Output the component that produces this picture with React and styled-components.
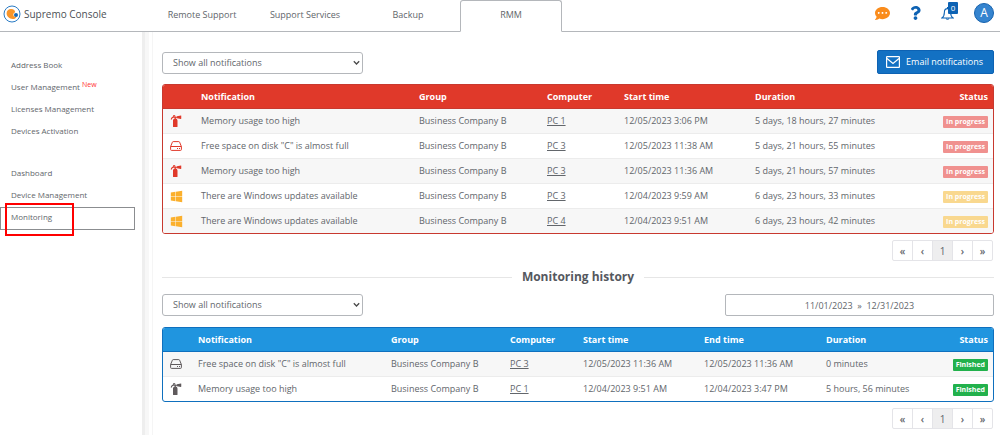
import * as React from "react"
import styled, { createGlobalStyle, ThemeProvider } from "styled-components"
import {
  FaCommentDots,
  FaFireExtinguisher,
  FaQuestion,
  FaWindows,
} from "react-icons/fa"

const theme = {
  text: "#62666b",
  line: "#b4b7bb",
  red: "#e0392a",
  blue: "#2095df",
  navy: "#0d62b3",
  amber: "#fbb02d",
  green: "#22b14c",
}

const GlobalStyle = createGlobalStyle`
  * {
    box-sizing: border-box;
  }

  body {
    margin: 0;
    background: #fff;
    color: ${theme.text};
    font-family: "Open Sans", "Noto Sans", sans-serif;
    font-size: 9px;
    line-height: 12px;
  }

  button, input, select {
    font: inherit;
    color: inherit;
  }
`

const Page = styled.div`
  min-height: 100vh;
  display: flex;
  flex-direction: column;
`

const Header = styled.header`
  display: flex;
  height: 32px;
  border-bottom: 1px solid ${({ theme }) => theme.line};
`

const Brand = styled.a`
  display: flex;
  align-items: center;
  gap: 3px;
  width: 151px;
  padding: 0 0 3px 3px;
  color: #4c4f55;
  font-size: 10px;
  font-weight: 500;
  text-decoration: none;
`

const Tabs = styled.nav`
  display: flex;
  gap: 1px;
`

const Tab = styled.a`
  width: 102px;
  height: 32px;
  padding-bottom: 2px;
  display: flex;
  align-items: center;
  justify-content: center;
  color: inherit;
  text-decoration: none;
  border: 1px solid ${({ theme, $active }) => ($active ? theme.line : "transparent")};
  border-bottom-color: ${({ $active }) => ($active ? "#fff" : "transparent")};
  border-radius: 3px 3px 0 0;
`

const Tools = styled.div`
  display: flex;
  align-items: center;
  margin-left: auto;
  padding: 0 6px 5px 0;
  gap: 20px;
`

const Tool = styled.button`
  position: relative;
  display: flex;
  padding: 0;
  border: 0;
  background: none;
  color: ${({ $color }) => $color};

  svg {
    width: ${({ $width }) => $width}px;
  }
`

const Count = styled.span`
  position: absolute;
  top: -4px;
  right: -4px;
  width: 10px;
  height: 12px;
  border-radius: 1px;
  background: ${({ theme }) => theme.navy};
  color: #fff;
  font-size: 8px;
  line-height: 12px;
`

const Avatar = styled.button`
  width: 20px;
  height: 20px;
  padding: 0;
  border: 1px solid #1763ae;
  border-radius: 50%;
  background: #3584cf;
  color: #fff;
  font-size: 12px;
  line-height: 18px;
`

const Body = styled.div`
  flex: 1;
  display: flex;
`

const Sidebar = styled.aside`
  flex: 0 0 153px;
  padding: 23px 18px 0 0;
  background: linear-gradient(
    to right,
    #fff 142px,
    #eee 142px 145px,
    #f7f7f7 145px 149px,
    #fff 149px 152px,
    #f5f5f5 152px
  );
  font-size: 8px;
`

const Menu = styled.nav`
  display: flex;
  flex-direction: column;
  & + & {
    margin-top: 20px;
  }
`

const MenuLink = styled.a`
  position: relative;
  height: ${({ $active }) => ($active ? "23px" : "22px")};
  padding-left: 11px;
  line-height: 20px;
  color: inherit;
  text-decoration: none;
  box-shadow: ${({ $active }) => ($active ? "inset 0 0 0 1px #8b8d90" : "none")};

  sup {
    color: #f33;
    font-size: 7px;
    line-height: 0;
    vertical-align: 3px;
  }
`

const Marker = styled.span`
  position: absolute;
  left: 5px;
  top: -4px;
  width: 69px;
  height: 33px;
  border: 2px solid #f00;
  pointer-events: none;
`

const Content = styled.main`
  flex: 1;
  min-width: 0;
  padding: 18px 6px 6px 9px;
`

const Toolbar = styled.div`
  display: flex;
  justify-content: space-between;
  align-items: ${({ $align }) => $align};
  height: 24px;
  margin-bottom: 10px;
`

const SelectBox = styled.label`
  position: relative;
  width: 201px;

  select {
    appearance: none;
    display: block;
    width: 100%;
    height: 22px;
    padding: 0 10px;
    border: 1px solid ${({ theme }) => theme.line};
    border-radius: 3px;
    background: #fff;
  }

  svg {
    position: absolute;
    right: 3px;
    top: 8px;
  }
`

const EmailButton = styled.button`
  display: flex;
  align-items: center;
  gap: 6px;
  height: 24px;
  padding: 0 10px 0 8px;
  border: 1px solid ${({ theme }) => theme.navy};
  border-radius: 2px;
  background: #1371c3;
  color: #fff;
`

const DateRange = styled.input`
  width: 269px;
  height: 22px;
  padding: 0;
  border: 1px solid ${({ theme }) => theme.line};
  border-radius: 2px;
  text-align: center;
`

const TableFrame = styled.div`
  overflow: hidden;
  border: 1px solid ${({ $edge }) => $edge};
  border-radius: 3px;
`

const Table = styled.table`
  table-layout: fixed;
  width: 100%;
  border-spacing: 0;

  th,
  td {
    height: 25px;
    padding: 0 6px;
    text-align: left;
    white-space: nowrap;
  }

  th {
    height: 24px;
    padding-top: 1px;
    background: ${({ $color }) => $color};
    border-bottom: 1px solid ${({ $edge }) => $edge};
    color: #fff;
    font-weight: 700;
  }

  td {
    border-bottom: 1px solid #ececec;
  }

  tbody tr:nth-child(odd) {
    background: #f7f7f7;
  }

  tbody tr:last-child td {
    height: 24px;
    border-bottom: 0;
  }

  th:last-child,
  td:last-child {
    padding-right: 5px;
    text-align: right;
  }

  td:last-child {
    padding-top: 2px;
  }

  td:first-child svg {
    display: block;
    margin-left: 1px;
  }

  a {
    color: inherit;
  }
`

const Badge = styled.span`
  display: inline-block;
  height: 12px;
  padding: 0 3px;
  border-radius: 1px;
  background: ${({ $color }) => $color};
  color: #fff;
  font-size: 7px;
  font-weight: 700;
  line-height: 12px;
  vertical-align: middle;
`

const Pager = styled.nav`
  display: flex;
  justify-content: flex-end;
  margin: 6px 1px 0 0;
`

const PageButton = styled.button`
  width: 21px;
  height: 21px;
  padding: 0;
  border: 1px solid #e4e4e8;
  background: ${({ $current }) => ($current ? "#eeeeef" : "#fff")};
  font-size: 10px;
  font-weight: ${({ $current }) => ($current ? 400 : 600)};

  & + & {
    margin-left: -1px;
  }
  &:first-child {
    border-radius: 2px 0 0 2px;
  }
  &:last-child {
    border-radius: 0 2px 2px 0;
  }
`

const Divider = styled.h2`
  display: flex;
  align-items: center;
  gap: 10px;
  height: 20px;
  margin: 6px 0;
  color: #55585e;
  font-size: 12px;
  font-weight: 700;

  &:before,
  &:after {
    content: "";
    flex: 1;
    height: 1px;
    background: #e6e6e6;
  }
`

const Logo = () => (
  <svg width="18" height="18" viewBox="0 0 18 18" aria-hidden="true">
    <circle cx="9" cy="9" r="8" fill="#fff" stroke="#2a7bc4" strokeWidth="1" />
    <path
      d="M8 4c3 0 4 1.500 4.200 3.500-1.500.2-2.200 1.500-1.700 2.900.4 1.300 1.700 1.600 3 1.300-.6 1.700-2.200 2.400-3.900 2.300C6.500 13.800 3.600 11.300 3.600 8.200 3.600 5.700 5.500 4 8 4z"
      fill="#f9962a"
    />
    <circle cx="13" cy="10" r="2" fill="#1668b5" />
  </svg>
)

const Bell = () => (
  <svg height="15" viewBox="0 0 12 13" fill="none" stroke="currentColor" aria-hidden="true">
    <path d="M6 .6v1.400M6 2c-1.900 0-2.900 1.500-2.900 3.500 0 3-1 4.300-2.300 5.200h10.400c-1.300-.9-2.300-2.200-2.300-5.200 0-2-1-3.500-2.900-3.500z" />
    <path d="M4.700 11a1.400 1.400 0 0 0 2.600 0" />
  </svg>
)

const Envelope = () => (
  <svg width="14" height="12" viewBox="0 0 14 12" fill="none" stroke="currentColor" aria-hidden="true">
    <rect x=".6" y=".6" width="12.800" height="10.800" rx=".5" strokeWidth="1.200" />
    <path d="M1 2.500l6 5 6-5" strokeWidth="1.200" />
  </svg>
)

const Disk = ({ color }) => (
  <svg width="12" height="10" viewBox="0 0 12 10" fill="none" stroke={color} aria-hidden="true">
    <path d="M.6 5.500L2.400 1.200Q2.600.6 3.200.6h5.600q.6 0 .8.6l1.800 4.300v3q0 .9-.9.9h-9q-.9 0-.9-.9zM.6 5.500h10.800" />
    <path d="M7 7.500h1M9 7.500h1" />
  </svg>
)

const Chevron = () => (
  <svg width="7" height="6" viewBox="0 0 7 6" fill="none" stroke="#4a4a4a" aria-hidden="true">
    <path d="M.8 1.300l2.700 2.700 2.700-2.700" strokeWidth="1.300" />
  </svg>
)

const icons = {
  memory: (color) => <FaFireExtinguisher size={12} color={color} />,
  disk: (color) => <Disk color={color} />,
  windows: (color) => <FaWindows size={13} color={color} />,
}

const activeColumns = [
  ["", 32],
  ["Notification", 218],
  ["Group", 128],
  ["Computer", 77],
  ["Start time", 131],
  ["Duration", 150],
  ["Status", 94],
]

const activeRows = [
  ["memory", "Memory usage too high", "PC 1", ["12/05/2023 3:06 PM", "5 days, 18 hours, 27 minutes"]],
  ["disk", 'Free space on disk "C" is almost full', "PC 3", ["12/05/2023 11:38 AM", "5 days, 21 hours, 55 minutes"]],
  ["memory", "Memory usage too high", "PC 3", ["12/05/2023 11:36 AM", "5 days, 21 hours, 57 minutes"]],
  ["windows", "There are Windows updates available", "PC 3", ["12/04/2023 9:59 AM", "6 days, 23 hours, 33 minutes"]],
  ["windows", "There are Windows updates available", "PC 4", ["12/04/2023 9:51 AM", "6 days, 23 hours, 42 minutes"]],
]

const historyColumns = [
  ["", 29],
  ["Notification", 193],
  ["Group", 119],
  ["Computer", 73],
  ["Start time", 121],
  ["End time", 122],
  ["Duration", 107],
  ["Status", 66],
]

const historyRows = [
  ["disk", 'Free space on disk "C" is almost full', "PC 3", ["12/05/2023 11:36 AM", "12/05/2023 11:36 AM", "0 minutes"]],
  ["memory", "Memory usage too high", "PC 1", ["12/04/2023 9:51 AM", "12/04/2023 3:47 PM", "5 hours, 56 minutes"]],
]

const NotificationTable = ({ columns, rows, color, edge, finished }) => (
  <TableFrame $edge={edge}>
    <Table $color={color} $edge={edge}>
      <colgroup>
        {columns.map(([name, width]) => (
          <col key={name} width={width} />
        ))}
      </colgroup>
      <thead>
        <tr>
          {columns.map(([name]) => (
            <th key={name}>{name}</th>
          ))}
        </tr>
      </thead>
      <tbody>
        {rows.map(([icon, title, pc, cells], i) => {
          const warning = icon === "windows"
          const iconColor = finished ? "#5f5a5c" : warning ? theme.amber : theme.red
          const badgeColor = finished ? theme.green : warning ? "#f9d88f" : "#f0918f"
          return (
            <tr key={i}>
              <td>{icons[icon](iconColor)}</td>
              <td>{title}</td>
              <td>Business Company B</td>
              <td>
                <a href="#computer">{pc}</a>
              </td>
              {cells.map((cell, j) => (
                <td key={j}>{cell}</td>
              ))}
              <td>
                <Badge $color={badgeColor}>{finished ? "Finished" : "In progress"}</Badge>
              </td>
            </tr>
          )
        })}
      </tbody>
    </Table>
  </TableFrame>
)

const Filter = ({ label }) => (
  <SelectBox>
    <select aria-label={label}>
      <option>Show all notifications</option>
    </select>
    <Chevron />
  </SelectBox>
)

const Pagination = () => (
  <Pager aria-label="Pages">
    {["«", "‹", "1", "›", "»"].map((label) => (
      <PageButton key={label} type="button" $current={label === "1"}>
        {label}
      </PageButton>
    ))}
  </Pager>
)

const App = () => {
  return (
    <ThemeProvider theme={theme}>
      <GlobalStyle />
      <Page>
        <Header>
          <Brand href="#home">
            <Logo />
            Supremo Console
          </Brand>
          <Tabs>
            <Tab href="#remote">Remote Support</Tab>
            <Tab href="#services">Support Services</Tab>
            <Tab href="#backup">Backup</Tab>
            <Tab href="#rmm" $active>
              RMM
            </Tab>
          </Tabs>
          <Tools>
            <Tool type="button" aria-label="Chat" $color="#fa8c1c" $width={15}>
              <FaCommentDots size={15} />
            </Tool>
            <Tool type="button" aria-label="Help" $color={theme.navy} $width={11}>
              <FaQuestion size={14} />
            </Tool>
            <Tool type="button" aria-label="Alerts" $color={theme.navy} $width={13}>
              <Bell />
              <Count>0</Count>
            </Tool>
            <Avatar type="button">A</Avatar>
          </Tools>
        </Header>
        <Body>
          <Sidebar>
            <Menu>
              <MenuLink href="#book">Address Book</MenuLink>
              <MenuLink href="#users">
                User Management <sup>New</sup>
              </MenuLink>
              <MenuLink href="#licenses">Licenses Management</MenuLink>
              <MenuLink href="#devices">Devices Activation</MenuLink>
            </Menu>
            <Menu>
              <MenuLink href="#dashboard">Dashboard</MenuLink>
              <MenuLink href="#management">Device Management</MenuLink>
              <MenuLink href="#monitoring" $active>
                Monitoring
                <Marker />
              </MenuLink>
            </Menu>
          </Sidebar>
          <Content>
            <Toolbar $align="flex-end">
              <Filter label="Active notifications" />
              <EmailButton type="button">
                <Envelope />
                Email notifications
              </EmailButton>
            </Toolbar>
            <NotificationTable
              columns={activeColumns}
              rows={activeRows}
              color={theme.red}
              edge="#c8392f"
            />
            <Pagination />
            <Divider>Monitoring history</Divider>
            <Toolbar $align="center">
              <Filter label="Past notifications" />
              <DateRange
                readOnly
                aria-label="Date range"
                value={"11/01/2023\u00a0\u00a0»\u00a0\u00a012/31/2023"}
              />
            </Toolbar>
            <NotificationTable
              columns={historyColumns}
              rows={historyRows}
              color={theme.blue}
              edge="#0f70be"
              finished
            />
            <Pagination />
          </Content>
        </Body>
      </Page>
    </ThemeProvider>
  )
}

export default App
